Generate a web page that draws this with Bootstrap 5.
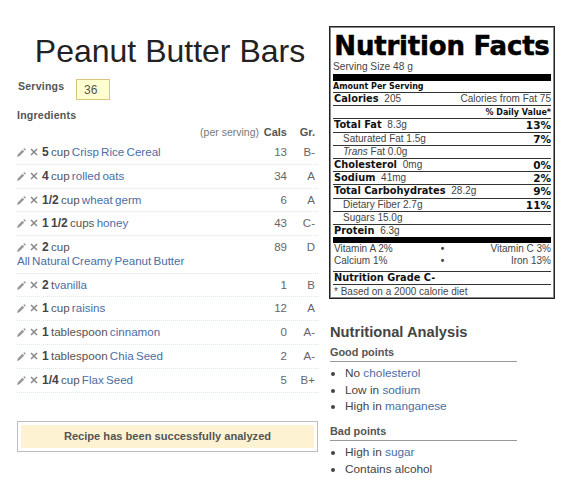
<!DOCTYPE html>
<html lang="en">
<head>
<meta charset="utf-8">
<title>Peanut Butter Bars</title>
<link href="https://cdn.jsdelivr.net/npm/bootstrap@5.3.0/dist/css/bootstrap.min.css" rel="stylesheet">
<style>
body{font-family:"Liberation Sans",Arial,sans-serif;font-size:12px;color:#555;background:#fff;width:562px;height:500px;overflow:hidden}
a{color:#4a6ea5;text-decoration:none}
.page-wrap{padding:26px 7px 0 17px;gap:11px}
.left-col{width:302px}
.right-col{width:227px}
.recipe-title{font-size:32px;line-height:34px;font-weight:400;color:#222;margin:8px 0 0;text-align:center;padding-left:5px;height:41px}
.sv-label,.ing-label{font-weight:700;font-size:10.6px;color:#555;letter-spacing:.2px}
.sv-row{height:21px;margin-top:4px}
.sv-label{width:58px;margin-left:1px;padding-bottom:5px}
.sv-input{width:34px;height:21px;padding:0 0 0 7px;border:1px solid #d8c67e;border-radius:0;background:#ffffcf;font-size:12px;color:#555;box-shadow:none}
.ing-label{margin-top:8px;line-height:14px}
.head-row{margin-top:3px;height:14px;line-height:14px;font-size:11px;padding-right:3px}
.head-row b{color:#555}
.per{width:242px;text-align:right;color:#777;font-size:10.5px}
.cal-h{width:28px;text-align:right}
.gr-h{width:28px;text-align:right}
.ing-list{margin:2px 0 0;padding:0}
.ing-row{border-bottom:1px dotted #dbe5ee;height:23.8px;padding-top:4px;line-height:14px;padding-right:3px;color:#555;font-size:11.6px;word-spacing:-1px}
.ing-row.tall{height:37.5px}
.ing-name{flex:1;min-width:0}
.ing-name b{color:#444;font-size:12px}
.ing-cal{width:27px;text-align:right;color:#666;font-size:11.5px}
.ing-gr{width:28px;text-align:right;color:#666;font-size:11.5px}
.pen{width:9px;height:9px;vertical-align:-1px;margin-right:4px}
.cross{width:8px;height:8px;vertical-align:0;margin-right:4px}
.done-box{margin-top:28px;height:31px;border:1px solid #bdbdbd;padding:3px}
.done-in{background:#fdf3d3;height:100%;font-weight:700;font-size:11.1px;color:#555}
.nf-box{border:1px solid #222;box-shadow:0 0 0 1px #888 inset;padding:6px 3px 0 3px;height:273px;color:#444;font-size:10px}
.nf-title{font-family:"DejaVu Sans",sans-serif;font-weight:700;font-size:26px;line-height:27px;color:#000;text-align:center;white-space:nowrap;-webkit-text-stroke:.5px #000;letter-spacing:-.2px}
.nf-size{line-height:13px;height:14px;font-size:10.2px}
.nf-bar{background:#000;height:7px}
.nf-bar.thin{height:6px}
.nf-amt{font-family:"DejaVu Sans",sans-serif;font-weight:700;font-size:8px;color:#111;height:11px;line-height:11px;border-bottom:1px solid #333;box-sizing:content-box}
.nf-r{height:12.2px;line-height:12.2px;border-bottom:1px solid #333;box-sizing:content-box;font-size:10px;padding:0 0 0 1px;white-space:nowrap}
.nf-r b,.nf-g{font-family:"DejaVu Sans",sans-serif;font-weight:700;color:#111;font-size:9.8px;margin-right:3px}
.nf-r .pct{font-size:10.5px;margin-right:0}
.nf-small b{font-size:8px;margin-right:0}
.ind{padding-left:10px}
.nf-vit{height:12.3px;line-height:12.3px;font-size:10px;padding:0 0 0 1px}
.nf-vit span{width:33.33%}
.nf-foot{line-height:14px;font-size:10px;padding-left:1px}
.nf-grade{margin-top:3px;border-top:1px solid #333}
.analysis{margin-top:24px;color:#444;padding-left:1px}
.an-title{font-size:14.7px;line-height:18px;font-weight:700;margin:0;color:#444}
.an-sub{font-size:10.9px;font-weight:700;line-height:15px;color:#555;border-bottom:1px solid #999;width:187px;margin:4px 0 0;padding-bottom:1px}
.an-list{margin:3px 0 0;padding:0 0 0 15px;font-size:11.8px;line-height:16.5px}
.an-list li::marker{color:#444}
.an-sub.second{margin-top:9px}
.an-list.second{margin-top:3px;line-height:17px}
</style>
</head>
<body>
<div class="d-flex page-wrap">
  <div class="left-col">
    <h1 class="recipe-title">Peanut Butter Bars</h1>
    <div class="d-flex align-items-center sv-row"><span class="sv-label">Servings</span><input class="form-control sv-input" value="36" aria-label="Servings"></div>
    <div class="ing-label">Ingredients</div>
    <div class="d-flex head-row"><span class="per">(per serving)</span><b class="cal-h">Cals</b><b class="gr-h">Gr.</b></div>
    <div class="ing-list">
      <div class="d-flex ing-row"><div class="ing-name"><svg class="pen" viewBox="0 0 10 10"><path d="M0 10l1-3 5-5 2 2-5 5z M7 1l1-1 2 2-1 1z" fill="#999"/></svg><svg class="cross" viewBox="0 0 8 8"><path d="M1 1l6 6M7 1l-6 6" stroke="#888" stroke-width="1.5"/></svg><b>5</b> cup <a href="#">Crisp Rice Cereal</a></div><div class="ing-cal">13</div><div class="ing-gr">B-</div></div>
      <div class="d-flex ing-row"><div class="ing-name"><svg class="pen" viewBox="0 0 10 10"><path d="M0 10l1-3 5-5 2 2-5 5z M7 1l1-1 2 2-1 1z" fill="#999"/></svg><svg class="cross" viewBox="0 0 8 8"><path d="M1 1l6 6M7 1l-6 6" stroke="#888" stroke-width="1.5"/></svg><b>4</b> cup <a href="#">rolled oats</a></div><div class="ing-cal">34</div><div class="ing-gr">A</div></div>
      <div class="d-flex ing-row"><div class="ing-name"><svg class="pen" viewBox="0 0 10 10"><path d="M0 10l1-3 5-5 2 2-5 5z M7 1l1-1 2 2-1 1z" fill="#999"/></svg><svg class="cross" viewBox="0 0 8 8"><path d="M1 1l6 6M7 1l-6 6" stroke="#888" stroke-width="1.5"/></svg><b>1/2</b> cup <a href="#">wheat germ</a></div><div class="ing-cal">6</div><div class="ing-gr">A</div></div>
      <div class="d-flex ing-row"><div class="ing-name"><svg class="pen" viewBox="0 0 10 10"><path d="M0 10l1-3 5-5 2 2-5 5z M7 1l1-1 2 2-1 1z" fill="#999"/></svg><svg class="cross" viewBox="0 0 8 8"><path d="M1 1l6 6M7 1l-6 6" stroke="#888" stroke-width="1.5"/></svg><b>1 1/2</b> cups <a href="#">honey</a></div><div class="ing-cal">43</div><div class="ing-gr">C-</div></div>
      <div class="d-flex ing-row tall"><div class="ing-name"><svg class="pen" viewBox="0 0 10 10"><path d="M0 10l1-3 5-5 2 2-5 5z M7 1l1-1 2 2-1 1z" fill="#999"/></svg><svg class="cross" viewBox="0 0 8 8"><path d="M1 1l6 6M7 1l-6 6" stroke="#888" stroke-width="1.5"/></svg><b>2</b> cup<br><a href="#">All Natural Creamy Peanut Butter</a></div><div class="ing-cal">89</div><div class="ing-gr">D</div></div>
      <div class="d-flex ing-row"><div class="ing-name"><svg class="pen" viewBox="0 0 10 10"><path d="M0 10l1-3 5-5 2 2-5 5z M7 1l1-1 2 2-1 1z" fill="#999"/></svg><svg class="cross" viewBox="0 0 8 8"><path d="M1 1l6 6M7 1l-6 6" stroke="#888" stroke-width="1.5"/></svg><b>2</b> t<a href="#">vanilla</a></div><div class="ing-cal">1</div><div class="ing-gr">B</div></div>
      <div class="d-flex ing-row"><div class="ing-name"><svg class="pen" viewBox="0 0 10 10"><path d="M0 10l1-3 5-5 2 2-5 5z M7 1l1-1 2 2-1 1z" fill="#999"/></svg><svg class="cross" viewBox="0 0 8 8"><path d="M1 1l6 6M7 1l-6 6" stroke="#888" stroke-width="1.5"/></svg><b>1</b> cup <a href="#">raisins</a></div><div class="ing-cal">12</div><div class="ing-gr">A</div></div>
      <div class="d-flex ing-row"><div class="ing-name"><svg class="pen" viewBox="0 0 10 10"><path d="M0 10l1-3 5-5 2 2-5 5z M7 1l1-1 2 2-1 1z" fill="#999"/></svg><svg class="cross" viewBox="0 0 8 8"><path d="M1 1l6 6M7 1l-6 6" stroke="#888" stroke-width="1.5"/></svg><b>1</b> tablespoon <a href="#">cinnamon</a></div><div class="ing-cal">0</div><div class="ing-gr">A-</div></div>
      <div class="d-flex ing-row"><div class="ing-name"><svg class="pen" viewBox="0 0 10 10"><path d="M0 10l1-3 5-5 2 2-5 5z M7 1l1-1 2 2-1 1z" fill="#999"/></svg><svg class="cross" viewBox="0 0 8 8"><path d="M1 1l6 6M7 1l-6 6" stroke="#888" stroke-width="1.5"/></svg><b>1</b> tablespoon <a href="#">Chia Seed</a></div><div class="ing-cal">2</div><div class="ing-gr">A-</div></div>
      <div class="d-flex ing-row"><div class="ing-name"><svg class="pen" viewBox="0 0 10 10"><path d="M0 10l1-3 5-5 2 2-5 5z M7 1l1-1 2 2-1 1z" fill="#999"/></svg><svg class="cross" viewBox="0 0 8 8"><path d="M1 1l6 6M7 1l-6 6" stroke="#888" stroke-width="1.5"/></svg><b>1/4</b> cup <a href="#">Flax Seed</a></div><div class="ing-cal">5</div><div class="ing-gr">B+</div></div>
    </div>
    <div class="done-box"><div class="done-in d-flex align-items-center justify-content-center">Recipe has been successfully analyzed</div></div>
  </div>
  <div class="right-col">
    <div class="nf-box">
      <div class="nf-title">Nutrition Facts</div>
      <div class="nf-size">Serving Size 48 g</div>
      <div class="nf-bar"></div>
      <div class="nf-amt">Amount Per Serving</div>
      <div class="nf-r d-flex justify-content-between"><span><b>Calories</b> 205</span><span>Calories from Fat 75</span></div>
      <div class="nf-r nf-small text-end"><b>% Daily Value*</b></div>
      <div class="nf-r d-flex justify-content-between"><span><b>Total Fat</b> 8.3g</span><b class="pct">13%</b></div>
      <div class="nf-r ind d-flex justify-content-between"><span>Saturated Fat 1.5g</span><b class="pct">7%</b></div>
      <div class="nf-r ind"><i>Trans</i> Fat 0.0g</div>
      <div class="nf-r d-flex justify-content-between"><span><b>Cholesterol</b> 0mg</span><b class="pct">0%</b></div>
      <div class="nf-r d-flex justify-content-between"><span><b>Sodium</b> 41mg</span><b class="pct">2%</b></div>
      <div class="nf-r d-flex justify-content-between"><span><b>Total Carbohydrates</b> 28.2g</span><b class="pct">9%</b></div>
      <div class="nf-r ind d-flex justify-content-between"><span>Dietary Fiber 2.7g</span><b class="pct">11%</b></div>
      <div class="nf-r ind">Sugars 15.0g</div>
      <div class="nf-r border-0"><b>Protein</b> 6.3g</div>
      <div class="nf-bar thin"></div>
      <div class="nf-vit d-flex"><span>Vitamin A 2%</span><span class="text-center"><b>•</b></span><span class="text-end">Vitamin C 3%</span></div>
      <div class="nf-vit d-flex"><span>Calcium 1%</span><span class="text-center"><b>•</b></span><span class="text-end">Iron 13%</span></div>
      <div class="nf-r nf-grade"><b>Nutrition Grade C-</b></div>
      <div class="nf-foot">* Based on a 2000 calorie diet</div>
    </div>
    <div class="analysis">
      <h2 class="an-title">Nutritional Analysis</h2>
      <h3 class="an-sub">Good points</h3>
      <ul class="an-list">
        <li>No <a href="#">cholesterol</a></li>
        <li>Low in <a href="#">sodium</a></li>
        <li>High in <a href="#">manganese</a></li>
      </ul>
      <h3 class="an-sub second">Bad points</h3>
      <ul class="an-list second">
        <li>High in <a href="#">sugar</a></li>
        <li>Contains alcohol</li>
      </ul>
    </div>
  </div>
</div>
</body>
</html>
